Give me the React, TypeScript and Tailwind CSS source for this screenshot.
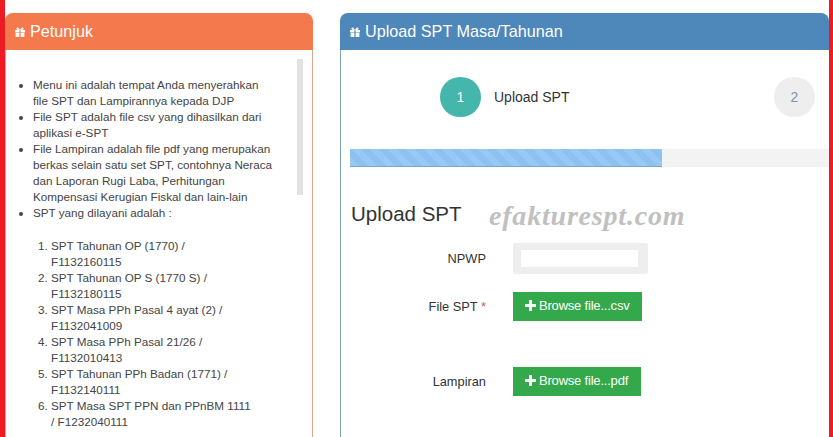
import React from "react";

const Gift = () => (
  <svg width="10" height="10" viewBox="0 0 10 10" className="shrink-0" fill="#fff">
    <path d="M0 3h4.400v2.200H0zM5.600 3H10v2.200H5.600zM.6 5.700h3.800V10H1.100a.5.5 0 0 1-.5-.5zM5.600 5.700h3.800v3.800a.5.5 0 0 1-.5.5H5.600z" />
    <path fillRule="evenodd" d="M5 3.200C3.900 3.400 2.300 3.300 1.700 2.500 1 1.500 1.700.3 2.700.5 3.800.7 4.600 1.900 5 3.200zM3.700 2.400C3.400 1.800 3 1.500 2.700 1.500c-.3 0-.3.4-.1.600.2.200.6.300 1.100.3zM5 3.200c1.100.2 2.700.1 3.300-.7.700-1 0-2.200-1-2C6.200.7 5.400 1.900 5 3.200zM6.300 2.400c.3-.6.700-.9 1-.9.3 0 .3.400.1.600-.2.200-.6.300-1.100.3z" />
  </svg>
);

const Plus = () => (
  <svg width="11" height="11" viewBox="0 0 11 11" fill="#fff" className="shrink-0">
    <path d="M4 0h3v4h4v3H7v4H4V7H0V4h4z" />
  </svg>
);

const Header = ({ title, color }: { title: string; color: string }) => (
  <div className={`flex h-[37px] items-center gap-[5px] rounded-t-[8px] pl-[10px] text-[16.200px] text-white ${color}`}>
    <Gift />
    <span>{title}</span>
  </div>
);

const items = [
  "SPT Tahunan OP (1770) / F1132160115",
  "SPT Tahunan OP S (1770 S) / F1132180115",
  "SPT Masa PPh Pasal 4 ayat (2) / F1132041009",
  "SPT Masa PPh Pasal 21/26 / F1132010413",
  "SPT Tahunan PPh Badan (1771) / F1132140111",
  "SPT Masa SPT PPN dan PPnBM 1111 / F1232040111",
];

const LeftPanel = () => (
  <section className="relative flex w-[308px] shrink-0 flex-col">
    <Header title="Petunjuk" color="bg-[#f4794d]" />
    <div className="relative flex-1 border-x border-[#e0a48f] pl-[27px] pr-[38px] pt-[27px] text-[11.700px] leading-[16px] text-[#444]">
      <div className="absolute right-[9px] top-[9px] h-[136px] w-[6px] bg-[#e2e2e2]" />
      <ul className="list-disc pl-0">
        <li>Menu ini adalah tempat Anda menyerahkan file SPT dan Lampirannya kepada DJP</li>
        <li>File SPT adalah file csv yang dihasilkan dari aplikasi e-SPT</li>
        <li>File Lampiran adalah file pdf yang merupakan berkas selain satu set SPT, contohnya Neraca dan Laporan Rugi Laba, Perhitungan Kompensasi Kerugian Fiskal dan lain-lain</li>
        <li>
          SPT yang dilayani adalah :
          <ol className="mt-[17px] list-decimal pl-[18px] pr-[19px]">
            {items.map((t) => (
              <li key={t}>{t}</li>
            ))}
          </ol>
        </li>
      </ul>
    </div>
  </section>
);

const Step = ({ n, active }: { n: number; active: boolean }) => (
  <div
    className={`flex h-[40px] w-[41px] shrink-0 items-center justify-center rounded-full text-[14px] ${
      active ? "bg-[#45b6ac] text-white" : "bg-[#eeeeee] text-[#7f93ad]"
    }`}
  >
    {n}
  </div>
);

const Row = ({ label, req, children, className }: { label: string; req?: boolean; children: React.ReactNode; className: string }) => (
  <div className={`flex items-center ${className}`}>
    <div className="w-[136px] text-right text-[12.800px] text-[#333]">
      {label}
      {req && <span className="text-[#d9534f]"> *</span>}
    </div>
    <div className="ml-[27px]">{children}</div>
  </div>
);

const Browse = ({ label, width }: { label: string; width: string }) => (
  <div className={`flex h-[29px] items-center gap-[3px] bg-[#34a94b] pb-[2px] pl-[12px] text-[13px] tracking-[-0.2px] text-white ${width}`}>
    <Plus />
    <span>{label}</span>
  </div>
);

const RightPanel = () => (
  <section className="flex min-w-0 flex-1 flex-col overflow-hidden">
    <Header title="Upload SPT Masa/Tahunan" color="bg-[#4e87ba]" />
    <div className="relative flex-1 border-l border-[#7fa0b3] pl-[9px] pt-[27px]">
      <div className="flex items-center pl-[90px]">
        <Step n={1} active />
        <span className="ml-[13px] w-[280px] text-[14px] text-[#333]">Upload SPT</span>
        <Step n={2} active={false} />
      </div>
      <div className="mt-[32px] h-[18px] w-[500px] bg-[#f3f3f3]">
        <div className="h-full w-[312px] border-b border-[#77a8d0] bg-[#8cc1f2] bg-[repeating-linear-gradient(45deg,#98c9f5_0,#98c9f5_6.400px,#8cc1f2_6.400px,#8cc1f2_12.800px)]" />
      </div>
      <h2 className="ml-[1px] mt-[33px] text-[20.500px] leading-[28px] text-[#333]">Upload SPT</h2>
      <div className="absolute left-[148px] top-[150px] font-['Liberation_Serif',serif] text-[28px] font-bold italic leading-[32px] tracking-[0.800px] text-[#c0c0c0]">
        efakturespt.com
      </div>
      <Row label="NPWP" className="mt-[15px] h-[31px]">
        <div className="flex h-[31px] w-[135px] items-center rounded-[2px] border-y-[7px] border-l-[8px] border-r-[10px] border-[#eeeeee] bg-white" />
      </Row>
      <Row label="File SPT" req className="mt-[18px]">
        <Browse label="Browse file...csv" width="w-[129px]" />
      </Row>
      <Row label="Lampiran" className="mt-[46px]">
        <Browse label="Browse file...pdf" width="w-[128px]" />
      </Row>
    </div>
  </section>
);

export default function App() {
  return (
    <div className="flex h-[437px] w-[833px] overflow-hidden bg-white font-['Liberation_Sans',Arial,sans-serif]">
      <div className="w-[5px] shrink-0 bg-[#ed1c24]" />
      <main className="flex min-w-0 flex-1 gap-[27px] pt-[13px]">
        <LeftPanel />
        <RightPanel />
      </main>
      <div className="w-[4px] shrink-0 bg-[#ed1c24]" />
    </div>
  );
}
